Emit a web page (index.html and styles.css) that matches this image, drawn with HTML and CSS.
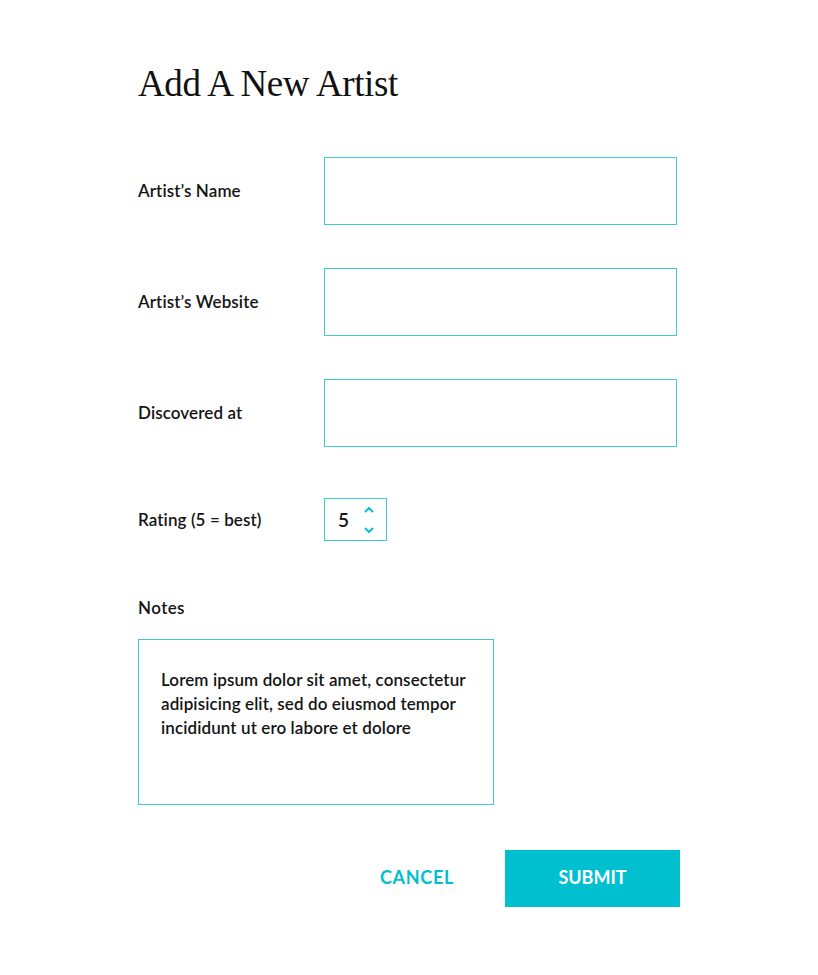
FILE: index.html
```html
<!DOCTYPE html>
<html lang="en">
<head>
    <meta charset="UTF-8">
    <meta name="viewport" content="width=device-width, initial-scale=1.0">
    <title>Add A New Artist</title>
    <link rel="stylesheet" href="styles.css">
</head>
<body>
    <main class="page">
        <h1>Add A New Artist</h1>

        <form id="artist-form" class="artist-form">
            <div class="field">
                <label for="name">Artist’s Name</label>
                <input type="text" id="name" name="name">
            </div>
            <div class="field">
                <label for="website">Artist’s Website</label>
                <input type="text" id="website" name="website">
            </div>
            <div class="field">
                <label for="discovered">Discovered at</label>
                <input type="text" id="discovered" name="discovered">
            </div>

            <div class="field field-rating">
                <label for="rating">Rating (5 = best)</label>
                <div class="numbox">
                    <span class="num-value" id="rating">5</span>
                    <div class="num-arrows">
                        <svg width="10" height="7" viewBox="0 0 10 7"><path d="M1.5 5.5 L5 2 L8.5 5.5" fill="none" stroke="#00bfd0" stroke-width="1.8" stroke-linecap="round" stroke-linejoin="round"/></svg>
                        <svg width="10" height="7" viewBox="0 0 10 7"><path d="M1.5 1.5 L5 5 L8.5 1.5" fill="none" stroke="#00bfd0" stroke-width="1.8" stroke-linecap="round" stroke-linejoin="round"/></svg>
                    </div>
                </div>
            </div>

            <div class="notes">
                <label for="notes">Notes</label>
                <textarea id="notes" name="notes">Lorem ipsum dolor sit amet, consectetur adipisicing elit, sed do eiusmod tempor incididunt ut ero labore et dolore</textarea>
            </div>

            <div class="actions">
                <button type="button" class="btn-cancel">CANCEL</button>
                <button type="submit" class="btn-submit">SUBMIT</button>
            </div>
        </form>
    </main>
</body>
</html>
```

FILE: styles.css
```css
body {
    margin: 0;
    padding: 0;
    background-color: #ffffff;
    font-family: Lato, "Noto Sans", sans-serif;
    color: #141414;
}

.page {
    width: 542px;
    padding: 58px 0 40px 138px;
}

h1 {
    margin: 0;
    font-family: "Liberation Serif", "DejaVu Serif", serif;
    font-weight: normal;
    font-size: 37px;
    line-height: 52px;
    color: #111111;
    letter-spacing: -0.4px;
}

.artist-form {
    margin-top: 47px;
}

.field {
    display: flex;
    align-items: center;
    margin-bottom: 43px;
}

.field label {
    width: 186px;
    flex-shrink: 0;
    font-size: 17px;
    font-weight: 600;
    line-height: 24px;
    letter-spacing: 0.1px;
}

.field input {
    width: 353px;
    height: 68px;
    box-sizing: border-box;
    border: 1px solid #3ccbd8;
    border-radius: 0;
    padding: 0 16px;
    font-family: inherit;
    font-size: 16px;
    outline: none;
}

.field-rating {
    margin-top: 51px;
}

.numbox {
    width: 63px;
    height: 43px;
    box-sizing: border-box;
    border: 1px solid #3ccbd8;
    display: flex;
    align-items: center;
    padding: 0 0 0 13px;
}

.num-value {
    font-size: 19px;
    font-weight: 600;
    width: 26px;
}

.num-arrows {
    display: flex;
    flex-direction: column;
    gap: 14px;
    margin-top: 1px;
}

.num-arrows svg {
    display: block;
}

.notes {
    margin-top: 55px;
}

.notes label {
    display: block;
    font-size: 17px;
    font-weight: 600;
    line-height: 24px;
    letter-spacing: 0.4px;
}

.notes textarea {
    display: block;
    margin-top: 19px;
    width: 356px;
    height: 166px;
    box-sizing: border-box;
    border: 1px solid #3ccbd8;
    border-radius: 0;
    padding: 28px 18px 0 22px;
    font-family: inherit;
    font-size: 17px;
    font-weight: 600;
    line-height: 24px;
    letter-spacing: 0.1px;
    color: #141414;
    resize: none;
    outline: none;
}

.actions {
    display: flex;
    justify-content: flex-end;
    align-items: center;
    margin-top: 45px;
}

.actions button {
    font-family: inherit;
    font-size: 18px;
    font-weight: 700;
    border: none;
    cursor: pointer;
}

.btn-cancel {
    background: none;
    color: #00bfd0;
    padding: 0 0 4px;
    margin-right: 51px;
    letter-spacing: 0.7px;
}

.btn-submit {
    width: 175px;
    height: 57px;
    padding-bottom: 4px;
    background-color: #00c0d0;
    color: #ffffff;
}
```
